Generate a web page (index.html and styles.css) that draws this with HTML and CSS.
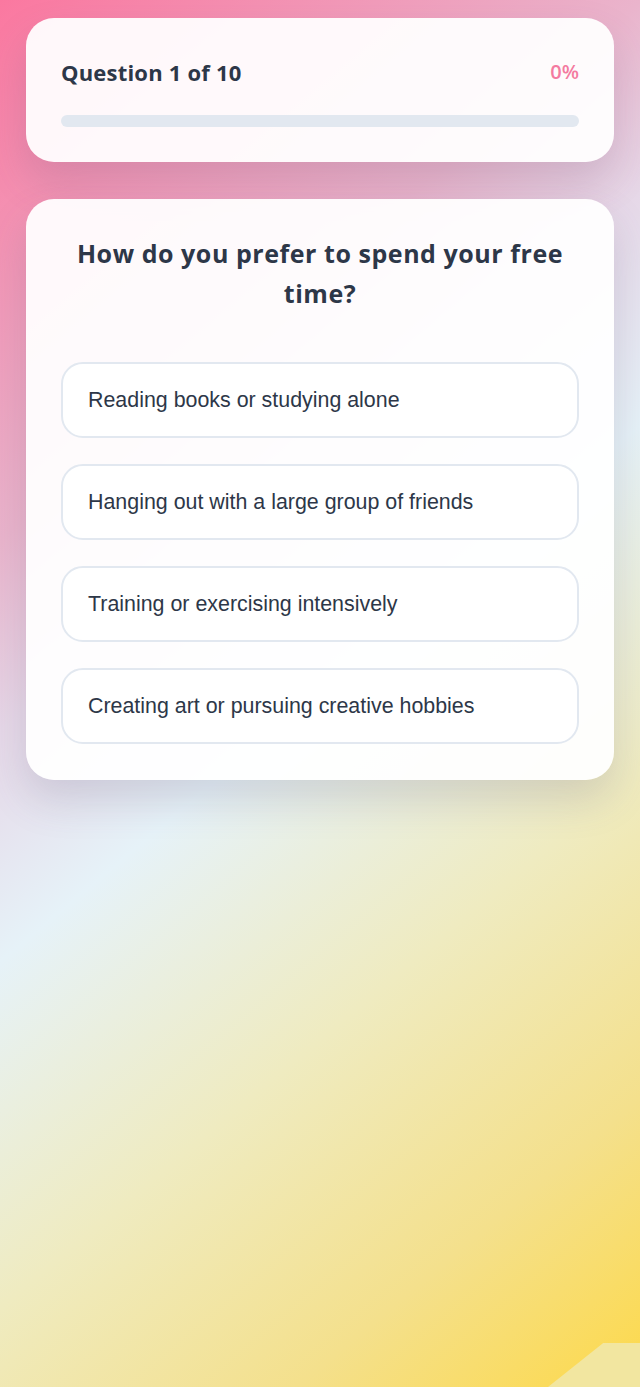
FILE: index.html
```html
<!DOCTYPE html>
<html lang="en">
<head>
<meta charset="utf-8">
<title>Quiz</title>
<link rel="stylesheet" href="styles.css">
</head>
<body>
<div class="page">
  <section class="card progress-card">
    <div class="progress-head">
      <h2 class="progress-title">Question 1 of 10</h2>
      <span class="progress-pct">0%</span>
    </div>
    <div class="track"><div class="fill" style="width:0%"></div></div>
  </section>
  <section class="card question-card">
    <h1 class="question">How do you prefer to spend your free time?</h1>
    <div class="options">
      <button class="option">Reading books or studying alone</button>
      <button class="option">Hanging out with a large group of friends</button>
      <button class="option">Training or exercising intensively</button>
      <button class="option">Creating art or pursuing creative hobbies</button>
    </div>
  </section>
</div>
<div class="corner"></div>
</body>
</html>
```
FILE: styles.css
```css
html, body {
  margin: 0;
  padding: 0;
}
body {
  min-height: 1387px;
  background: linear-gradient(140deg, #fb78a0 0%, #eab4cc 28%, #e6d8e8 38%, #e6f2f8 50%, #efebc0 68%, #f4e08c 85%, #fdd94a 100%);
  font-family: "Liberation Sans", Arial, sans-serif;
  position: relative;
  overflow: hidden;
}
.page {
  padding: 18px 26px 0;
  display: flex;
  flex-direction: column;
  gap: 37px;
}
.card {
  background: rgba(255, 255, 255, 0.94);
  border-radius: 28px;
  box-shadow: 0 20px 40px rgba(90, 80, 110, 0.18);
}
.progress-card {
  padding: 41px 35px 35px;
}
.progress-head {
  display: flex;
  justify-content: space-between;
  align-items: center;
  margin-bottom: 30px;
}
.progress-title {
  margin: 0;
  font-family: "Open Sans", sans-serif;
  font-weight: 700;
  font-size: 22px;
  line-height: 26px;
  color: #2d3748;
  letter-spacing: 0.2px;
}
.progress-pct {
  font-family: "Open Sans", sans-serif;
  font-weight: 600;
  font-size: 20px;
  line-height: 26px;
  color: #f47aa0;
}
.track {
  height: 12px;
  border-radius: 6px;
  background: #e2e8f0;
  overflow: hidden;
}
.fill {
  height: 100%;
  background: #f47aa0;
}
.question-card {
  padding: 34px 35px 36px;
}
.question {
  margin: 0 0 49px;
  text-align: center;
  font-family: "Open Sans", sans-serif;
  font-weight: 700;
  font-size: 25px;
  line-height: 40px;
  color: #2d3748;
  letter-spacing: 0.55px;
}
.options {
  display: flex;
  flex-direction: column;
  gap: 26px;
}
.option {
  display: block;
  width: 100%;
  height: 76px;
  padding: 0 25px;
  text-align: left;
  background: #ffffff;
  border: 2px solid #e2e8f0;
  border-radius: 22px;
  font-family: "Liberation Sans", Arial, sans-serif;
  font-size: 21.4px;
  color: #2d3748;
  cursor: pointer;
}
.corner {
  position: absolute;
  right: 0;
  bottom: 0;
  width: 92px;
  height: 44px;
  background: #f2e6a0;
  clip-path: polygon(60% 0, 100% 0, 100% 100%, 0 100%);
}
```
